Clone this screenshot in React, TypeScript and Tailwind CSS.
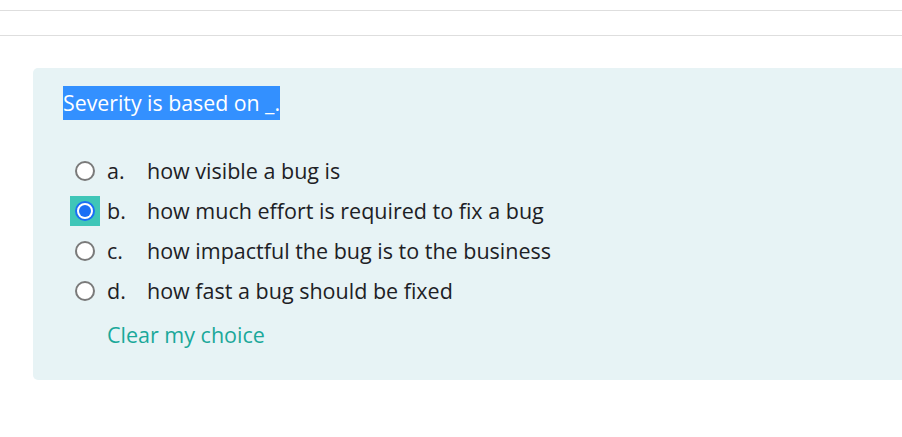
import { useState } from "react";

const options = [
  { letter: "a.", text: "how visible a bug is" },
  { letter: "b.", text: "how much effort is required to fix a bug" },
  { letter: "c.", text: "how impactful the bug is to the business" },
  { letter: "d.", text: "how fast a bug should be fixed" },
];

function Radio({ checked, focused }: { checked: boolean; focused?: boolean }) {
  return (
    <span
      className={`flex h-[30px] w-[30px] shrink-0 items-center justify-center ${
        focused ? "bg-[#3fc6b8]" : ""
      }`}
    >
      {checked ? (
        <span className="flex h-[20px] w-[20px] items-center justify-center rounded-full border-[2px] border-[#1a6ef5] bg-white">
          <span className="h-[12px] w-[12px] rounded-full bg-[#1a6ef5]" />
        </span>
      ) : (
        <span className="h-[20px] w-[20px] rounded-full border-[2px] border-[#7a7a7a] bg-white" />
      )}
    </span>
  );
}

export default function App() {
  const [selected, setSelected] = useState(1);

  return (
    <div className="h-[437px] w-[902px] overflow-hidden bg-white font-['Open_Sans',sans-serif] text-[#1d2125]">
      <div className="h-[11px] border-b border-[#dedede]" />
      <div className="h-[25px] border-b border-[#dedede]" />

      <div className="pl-[33px] pt-[32px]">
        <div className="h-[312px] rounded-l-[5px] bg-[#e7f3f5] pl-[30px] pt-[18px]">
          <div className="h-[34px] text-[21.3px] leading-[34px]">
            <span className="inline-block h-[34px] bg-[#3390ff] leading-[34px] text-white">
              Severity is based on _.
            </span>
          </div>

          <div className="mt-[31px] flex flex-col">
            {options.map((o, i) => (
              <label
                key={o.letter}
                className="ml-[7px] flex h-[40px] cursor-pointer items-center gap-[7px] text-[21.5px]"
                onClick={() => setSelected(i)}
              >
                <Radio checked={selected === i} focused={selected === i} />
                <span className="w-[33px]">{o.letter}</span>
                <span>{o.text}</span>
              </label>
            ))}
          </div>

          <button
            className="mt-[5px] ml-[44px] cursor-pointer text-[21.5px] leading-[38px] text-[#1aa89a]"
            onClick={() => setSelected(-1)}
          >
            Clear my choice
          </button>
        </div>
      </div>
    </div>
  );
}
